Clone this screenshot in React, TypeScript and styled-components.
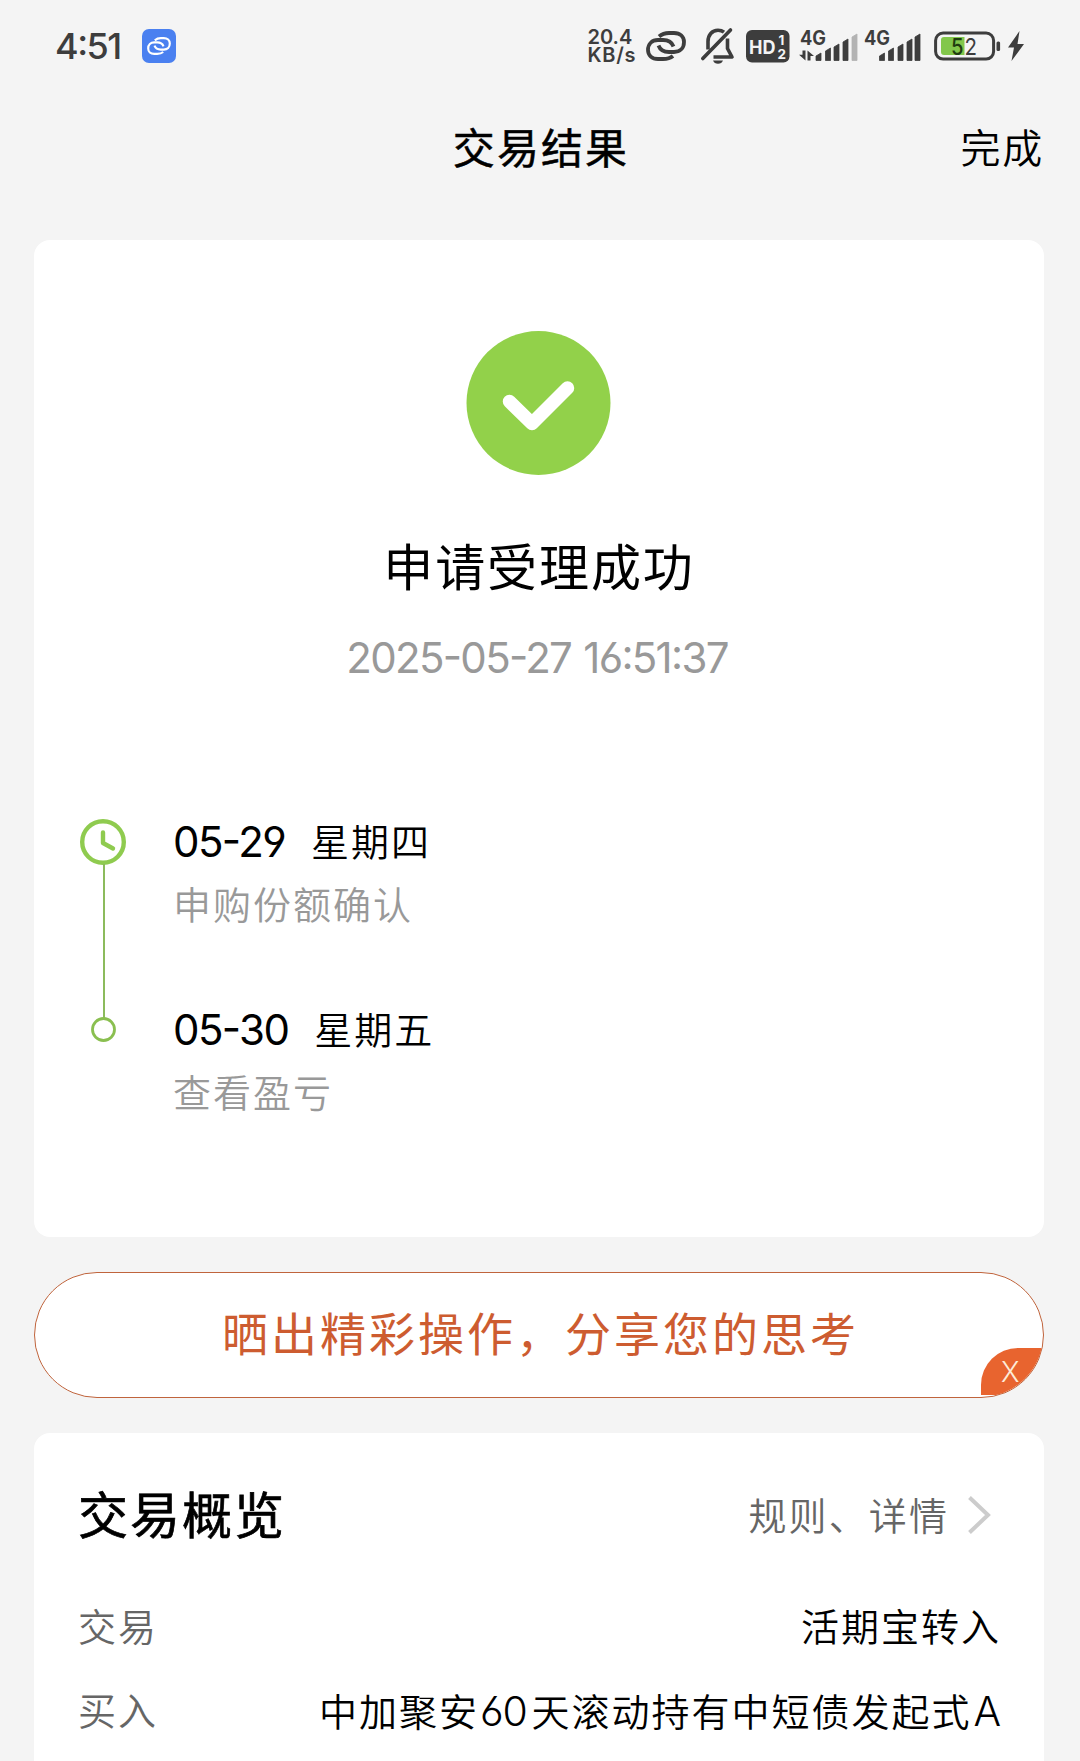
import React from "react";
import styled, { createGlobalStyle } from "styled-components";

const ink = "#3d3d3d";

const GlobalStyle = createGlobalStyle`
  * { box-sizing: border-box; }
  html, body { margin: 0; padding: 0; background: #f4f4f4; }
  body {
    font-family: Inter, "Noto Sans CJK SC", sans-serif;
    font-weight: 350;
    color: #000;
    overflow: hidden;
    font-feature-settings: "cv03", "cv04", "case";
  }
`;

const Page = styled.div`
  width: 1080px;
  height: 1761px;
  overflow: hidden;
  display: flex;
  flex-direction: column;
  background: #f4f4f4;
`;

const StatusBar = styled.header`
  height: 92px;
  flex: none;
  display: flex;
  align-items: center;
  padding: 0 56px 0 55px;
  color: ${ink};
`;

const Clock = styled.span`
  width: 87px;
  font-size: 36px;
  font-weight: 500;
  line-height: 40px;
  letter-spacing: -1.5px;
`;

const AppBadge = styled.span`
  width: 34px;
  height: 34px;
  border-radius: 7px;
  background: #4a80f0;
  display: flex;
  align-items: center;
  justify-content: center;
`;

const StatusIcons = styled.div`
  margin-left: auto;
  display: flex;
  align-items: center;
`;

const NetSpeed = styled.div`
  width: 58px;
  font-size: 20px;
  line-height: 18px;
  font-weight: 600;
  display: flex;
  flex-direction: column;
`;

const NetUnit = styled.span`
  letter-spacing: 0.7px;
`;

const Glyph = styled.svg<{ $gap?: number }>`
  display: block;
  flex: none;
  margin-left: ${(p) => p.$gap ?? 0}px;
  overflow: visible;
`;

const NavBar = styled.nav`
  height: 148px;
  flex: none;
  display: grid;
  grid-template-columns: 1fr auto 1fr;
  align-items: start;
  padding: 27px 36px 0 36px;
`;

const NavTitle = styled.h1`
  grid-column: 2;
  margin: 0;
  padding-left: 2px;
  font-size: 42px;
  font-weight: 400;
  -webkit-text-stroke: 0.5px #000;
  line-height: 60px;
  letter-spacing: 2.1px;
`;

const NavAction = styled.button`
  justify-self: end;
  border: 0;
  padding: 0;
  background: none;
  color: #000;
  font: inherit;
  font-size: 40px;
  line-height: 60px;
  letter-spacing: 1.8px;
`;

const Card = styled.section<{ $height: number }>`
  flex: none;
  width: 1010px;
  height: ${(p) => p.$height}px;
  margin-left: 34px;
  background: #fff;
  border-radius: 16px;
  display: flex;
  flex-direction: column;
`;

const Result = styled.div`
  display: flex;
  flex-direction: column;
  align-items: center;
  padding: 91px 0 0;
  height: 569px;
`;

const ResultTitle = styled.h2`
  margin: 57px 0 0;
  font-size: 50px;
  font-weight: 400;
  line-height: 72px;
  letter-spacing: 1.9px;
`;

const ResultTime = styled.time`
  margin: 24px 4px 0 0;
  font-size: 42px;
  font-weight: 380;
  line-height: 60px;
  color: #999;
  letter-spacing: -1.7px;
  word-spacing: 2px;
`;

const Timeline = styled.div`
  display: flex;
  padding-left: 45px;
`;

const Rail = styled.div`
  width: 94px;
  flex: none;
`;

const Steps = styled.div`
  display: flex;
  flex-direction: column;
  gap: 62px;
  padding-top: 1px;
`;

const Step = styled.div`
  height: 126px;
`;

const StepDate = styled.div`
  display: flex;
  gap: 26px;
  height: 64px;
  font-size: 38px;
  line-height: 64px;
  letter-spacing: 2px;
`;

const StepDay = styled.span`
  font-size: 42px;
  font-weight: 380;
  letter-spacing: -1.6px;
`;

const StepNote = styled.div`
  font-size: 38px;
  line-height: 62px;
  height: 62px;
  color: #999;
  letter-spacing: 2px;
`;

const ShareBanner = styled.div`
  position: relative;
  flex: none;
  width: 1010px;
  height: 126px;
  margin: 35px 0 35px 34px;
  border: 1px solid #c0643c;
  border-radius: 63px;
  background: #fff;
  overflow: hidden;
  display: flex;
  justify-content: center;
  padding-left: 3px;
  color: #cd5c30;
  font-size: 46px;
  font-weight: 400;
  line-height: 122px;
  letter-spacing: 3px;
`;

const CloseCorner = styled.button`
  position: absolute;
  right: 0;
  bottom: 2px;
  width: 62px;
  height: 47px;
  border: 0;
  padding: 1px 0 0 20px;
  border-radius: 37px 0 0 0;
  background: #e8642f;
  color: #fdebd8;
  font: inherit;
  font-size: 28px;
  font-weight: 300;
  line-height: 46px;
  letter-spacing: 0;
  text-align: left;
`;

const OverviewHead = styled.div`
  display: flex;
  align-items: center;
  height: 72px;
  margin-top: 47px;
  padding: 0 54px 0 44px;
`;

const OverviewTitle = styled.h3`
  margin: 0;
  font-size: 50px;
  font-weight: 400;
  -webkit-text-stroke: 0.7px #000;
  line-height: 72px;
  letter-spacing: 2px;
`;

const RulesLink = styled.a`
  margin-left: auto;
  font-size: 38px;
  line-height: 72px;
  letter-spacing: 2.1px;
  color: #666;
`;

const Row = styled.div`
  display: flex;
  justify-content: space-between;
  height: 60px;
  padding: 0 43px 0 44px;
  font-size: 38px;
  line-height: 60px;
  letter-spacing: 2px;
  white-space: nowrap;
`;

const RowLabel = styled.span`
  color: #666;
`;

const Rows = styled.div`
  display: flex;
  flex-direction: column;
  gap: 24px;
  margin-top: 45px;
`;

const Num = styled.span<{ $before?: number; $after?: number }>`
  font-size: 41px;
  letter-spacing: -1.2px;
  margin-left: ${(p) => p.$before ?? 0}px;
  margin-right: ${(p) => p.$after ?? 0}px;
`;

function LinkGlyph({ width, color, stroke }: { width: number; color: string; stroke: number }) {
  return (
    <Glyph width={width} height={width * 0.75} viewBox="0 0 40 30" fill="none" stroke={color} strokeWidth={stroke}>
      <path d="M13 5.500 C16 3 19 2 23 2 H28 C34 2 38 5.500 38 11 C38 17 34 21 28 21 H23 C18 21 14 18.500 12.500 14.500" />
      <path d="M27 25 C24 27.500 21 28 17 28 H12 C6 28 2 24.500 2 19 C2 13 6 9 12 9 H17 C22 9 26 11.500 27.500 15.500" />
    </Glyph>
  );
}

function BellOff() {
  return (
    <Glyph $gap={15} width={34} height={36} viewBox="0 0 34 36" fill="none" stroke={ink} strokeWidth="3.6">
      <path d="M7 21.500 V13.500 C7 7 11 2.300 17 2.300 C19.500 2.300 21.500 3 23 4.200" />
      <path d="M26.500 10.500 V20.500 L31 29 H12.500" strokeLinejoin="round" />
      <path d="M1.800 30.500 L29.500 2" strokeLinecap="round" />
      <path d="M12 32.500 H22 C21 34.700 19.500 35.700 17 35.700 C14.500 35.700 13 34.700 12 32.500Z" fill={ink} stroke="none" />
    </Glyph>
  );
}

function HdBadge() {
  return (
    <Glyph $gap={11.5} width={44} height={33} viewBox="0 0 44 33">
      <rect width="43.500" height="32.500" rx="6" fill={ink} />
      <g fill="#f4f4f4" fontFamily="Inter, sans-serif" fontWeight="700">
        <text x="3" y="23.500" fontSize="19" textLength="26.500" lengthAdjust="spacingAndGlyphs">HD</text>
        <text x="32.500" y="14.500" fontSize="13.500">1</text>
        <text x="31.500" y="28.500" fontSize="13.500">2</text>
      </g>
    </Glyph>
  );
}

function Signal({ gap, bars, faded, traffic }: { gap: number; bars: number[]; faded?: boolean; traffic?: boolean }) {
  const tops = [22, 17, 13, 8, 3];
  return (
    <Glyph $gap={gap} width={58} height={30} viewBox="0 0 58 30" fill={ink}>
      <text x="1" y="14" fontSize="19.500" fontWeight="700" fontFamily="Inter, sans-serif" textLength="26" lengthAdjust="spacingAndGlyphs">4G</text>
      {traffic && <path d="M3.500 19.500 H6.500 V29.500 L0 23.800 H3.500Z M8.500 29.500 V19.500 L15 25 H11.500 V29.500Z" />}
      {bars.map((x, i) => (
        <path
          key={x}
          d={`M${x} 29.500 V${tops[i] + 3} L${x + 5} ${tops[i]} V29.500Z`}
          fill={faded && i === 4 ? "#b3b3b3" : ink}
          stroke={faded && i === 4 ? "#b3b3b3" : ink}
          strokeWidth="0.800"
          strokeLinejoin="round"
        />
      ))}
    </Glyph>
  );
}

function Battery() {
  return (
    <Glyph $gap={13} width={66} height={30} viewBox="0 0 66 30">
      <rect x="1.600" y="2.100" width="58" height="26" rx="7.500" fill="none" stroke={ink} strokeWidth="3" />
      <path d="M10 6 H30.500 V24 H10 Q7 24 7 21 V9 Q7 6 10 6Z" fill="#82c74b" />
      <rect x="62.500" y="10.500" width="3.600" height="9.500" rx="1.500" fill={ink} />
      <text x="17" y="23.500" fontSize="23.500" fontWeight="500" fontFamily="Inter, sans-serif" fill="#1f3d10" textLength="12.500" lengthAdjust="spacingAndGlyphs">5</text>
      <text x="30.500" y="23.500" fontSize="23.500" fontWeight="400" fontFamily="Inter, sans-serif" fill={ink} textLength="12.500" lengthAdjust="spacingAndGlyphs">2</text>
    </Glyph>
  );
}

const steps = [
  { day: "05-29", week: "星期四", note: "申购份额确认" },
  { day: "05-30", week: "星期五", note: "查看盈亏" },
];

export default function App() {
  return (
    <Page>
      <GlobalStyle />
      <StatusBar>
        <Clock>4:51</Clock>
        <AppBadge>
          <LinkGlyph width={24} color="#fff" stroke={3.6} />
        </AppBadge>
        <StatusIcons>
          <NetSpeed>
            <span>20.4</span>
            <NetUnit>KB/s</NetUnit>
          </NetSpeed>
          <LinkGlyph width={40} color={ink} stroke={3.8} />
          <BellOff />
          <HdBadge />
          <Signal gap={9} bars={[17, 26.5, 35, 44, 53]} faded traffic />
          <Signal gap={6} bars={[16.5, 25.5, 35, 44, 52]} />
          <Battery />
          <Glyph $gap={8} width={16} height={30} viewBox="0 0 16 30">
            <path d="M11.500 0 L0 16.500 H6 L3.500 30 L16 13 H9.500Z" fill={ink} />
          </Glyph>
        </StatusIcons>
      </StatusBar>

      <NavBar>
        <NavTitle>交易结果</NavTitle>
        <NavAction>完成</NavAction>
      </NavBar>

      <Card $height={997}>
        <Result>
          <Glyph width={144} height={144} viewBox="0 0 144 144">
            <circle cx="71.500" cy="72" r="72" fill="#92d14a" />
            <path d="M42.500 70.500 L65 92.500 L100.500 57" fill="none" stroke="#fff" strokeWidth="13.500" strokeLinecap="round" strokeLinejoin="round" />
          </Glyph>
          <ResultTitle>申请受理成功</ResultTitle>
          <ResultTime>2025-05-27 16:51:37</ResultTime>
        </Result>
        <Timeline>
          <Rail>
            <Glyph width={48} height={240} viewBox="0 0 48 240" fill="none" stroke="#8fcb4f">
              <circle cx="24" cy="33" r="20.800" strokeWidth="4.400" />
              <path d="M24 23.500 V34 L34 39.500" strokeWidth="4.400" strokeLinecap="round" strokeLinejoin="round" />
              <path d="M25 55 V209" strokeWidth="2" stroke="#8cbb5c" />
              <circle cx="24.500" cy="220.500" r="11" strokeWidth="2.800" stroke="#8abf50" />
            </Glyph>
          </Rail>
          <Steps>
            {steps.map((s) => (
              <Step key={s.day}>
                <StepDate>
                  <StepDay>{s.day}</StepDay>
                  <span>{s.week}</span>
                </StepDate>
                <StepNote>{s.note}</StepNote>
              </Step>
            ))}
          </Steps>
        </Timeline>
      </Card>

      <ShareBanner>
        晒出精彩操作，分享您的思考
        <CloseCorner>X</CloseCorner>
      </ShareBanner>

      <Card $height={400}>
        <OverviewHead>
          <OverviewTitle>交易概览</OverviewTitle>
          <RulesLink>规则、详情</RulesLink>
          <Glyph $gap={19} width={22} height={38} viewBox="0 0 22 38">
            <path d="M1.500 0.500 L20 18 L1.500 35.500" fill="none" stroke="#ccc" strokeWidth="4" />
          </Glyph>
        </OverviewHead>
        <Rows>
          <Row>
            <RowLabel>交易</RowLabel>
            <span>活期宝转入</span>
          </Row>
          <Row>
            <RowLabel>买入</RowLabel>
            <span>
              中加聚安<Num $before={1} $after={5}>60</Num>天滚动持有中短债发起式<Num $before={2} $after={1}>A</Num>
            </span>
          </Row>
        </Rows>
      </Card>
    </Page>
  );
}
